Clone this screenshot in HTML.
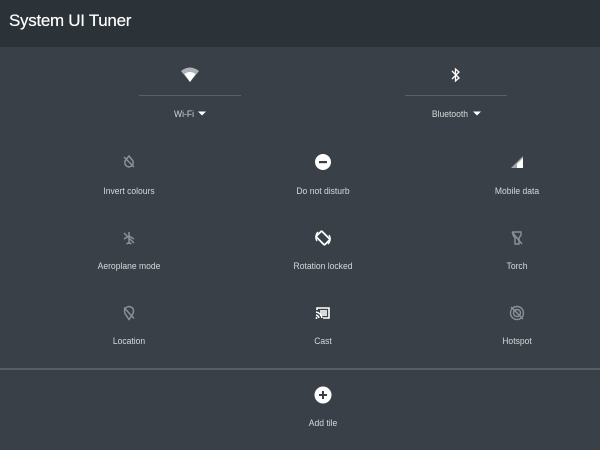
<!DOCTYPE html>
<html><head><style>
body{margin:0;width:600px;height:450px;background:#394047;font-family:"Liberation Sans",sans-serif;overflow:hidden;position:relative}
.hd{position:absolute;left:0;top:0;width:600px;height:47px;background:#2c3338}
.hd span{position:absolute;left:9px;top:11px;color:#fff;font-size:17px;letter-spacing:-0.3px;text-shadow:0 0 0.4px #fff}
.l{position:absolute;font-size:9px;color:#d6d8da;transform:translateX(-50%) scaleX(0.95);white-space:nowrap;line-height:10px}
.i{position:absolute;transform:translate(-50%,-50%)}
.ln{position:absolute;height:1px;background:#5a6066}
</style></head><body>
<div class="hd"><span>System UI Tuner</span></div>

<svg class="i" style="left:190px;top:75px" width="20" height="16" viewBox="0 0 20 16"><path d="M1 4Q10-3 19 4L10 15Z" fill="#fff" opacity=".6"/><path d="M4.5 7Q10 3 15.5 7L10 15Z" fill="#fff"/></svg>
<div class="ln" style="left:139px;top:95px;width:102px"></div>
<div class="l" style="left:184px;top:109px">Wi-Fi</div>
<svg class="i" style="left:202px;top:114px" width="8" height="5"><path d="M0 0H8L4 4Z" fill="#fff"/></svg>

<svg class="i" style="left:456px;top:75px" width="10" height="16" viewBox="0 0 10 16"><path d="M1 4L8 11 4.5 14V2L8 5 1 12" fill="none" stroke="#fff" stroke-width="1.3"/></svg>
<div class="ln" style="left:405px;top:95px;width:102px"></div>
<div class="l" style="left:450px;top:109px">Bluetooth</div>
<svg class="i" style="left:477px;top:114px" width="8" height="5"><path d="M0 0H8L4 4Z" fill="#fff"/></svg>

<svg class="i" style="left:129px;top:162px" width="14" height="14" viewBox="0 0 14 14"><path d="M7 1L3 6Q2 11 7 12Q12 11 11 6Z" fill="none" stroke="#8a9096" stroke-width="1.5"/><path d="M2 2L12 12" stroke="#8a9096" stroke-width="1.5"/></svg>
<div class="l" style="left:129px;top:186px">Invert colours</div>

<svg class="i" style="left:323px;top:162px" width="16" height="16"><circle cx="8" cy="8" r="8" fill="#fff"/><rect x="4" y="7" width="8" height="2.2" fill="#394047"/></svg>
<div class="l" style="left:323px;top:186px">Do not disturb</div>

<svg class="i" style="left:517px;top:162px" width="14" height="14"><path d="M1 13H13V1Z" fill="#fff" opacity=".55"/><path d="M7 13H13V3L7 9Z" fill="#fff"/></svg>
<div class="l" style="left:517px;top:186px">Mobile data</div>

<svg class="i" style="left:129px;top:238px" width="14" height="14" viewBox="0 0 14 14"><path d="M7 1V13M2 8L7 5 12 8M4.5 13L7 11.5 9.5 13M2 2L12 12" fill="none" stroke="#8a9096" stroke-width="1.5"/></svg>
<div class="l" style="left:129px;top:261px">Aeroplane mode</div>

<svg class="i" style="left:323px;top:238px" width="18" height="18" viewBox="0 0 18 18"><rect x="5" y="3" width="8" height="12" rx="1" transform="rotate(-45 9 9)" fill="none" stroke="#fff" stroke-width="1.8"/><path d="M3 12A7 7 0 0 1 4 3M15 6A7 7 0 0 1 14 15" fill="none" stroke="#fff" stroke-width="1.3"/></svg>
<div class="l" style="left:323px;top:261px">Rotation locked</div>

<svg class="i" style="left:517px;top:238px" width="12" height="14" viewBox="0 0 12 14"><path d="M2 1H10V4L8 7V13H4V7L2 4Z" fill="none" stroke="#8a9096" stroke-width="1.4"/><path d="M1 1L11 13" stroke="#8a9096" stroke-width="1.4"/></svg>
<div class="l" style="left:517px;top:261px">Torch</div>

<svg class="i" style="left:129px;top:313px" width="12" height="15" viewBox="0 0 12 15"><path d="M6 14L2 8Q0 2 6 1Q12 2 10 8Z" fill="none" stroke="#8a9096" stroke-width="1.5"/><path d="M1 2L11 13" stroke="#8a9096" stroke-width="1.5"/></svg>
<div class="l" style="left:129px;top:336px">Location</div>

<svg class="i" style="left:323px;top:313px" width="16" height="14" viewBox="0 0 16 14"><path d="M2 4V2H14V12H8" fill="none" stroke="#fff" stroke-width="1.6"/><path d="M1 6A7 7 0 0 1 7 12M1 9A4 4 0 0 1 4 12" fill="none" stroke="#fff" stroke-width="1.5"/><circle cx="1.5" cy="12" r="1" fill="#fff"/><rect x="5" y="4" width="7" height="6" fill="#fff" opacity=".8"/></svg>
<div class="l" style="left:323px;top:336px">Cast</div>

<svg class="i" style="left:517px;top:313px" width="16" height="16" viewBox="0 0 16 16"><circle cx="8" cy="8" r="6.5" fill="none" stroke="#8a9096" stroke-width="1.4"/><circle cx="8" cy="8" r="3.5" fill="none" stroke="#8a9096" stroke-width="1.4"/><path d="M2 2L14 14" stroke="#8a9096" stroke-width="1.5"/></svg>
<div class="l" style="left:517px;top:336px">Hotspot</div>

<div class="ln" style="left:0;top:368px;width:600px;height:2px;background:#585e64"></div>

<svg class="i" style="left:323px;top:395px" width="17" height="17"><circle cx="8.5" cy="8.5" r="8.5" fill="#fff"/><path d="M8.5 4.5V12.5M4.5 8.5H12.5" stroke="#394047" stroke-width="2"/></svg>
<div class="l" style="left:323px;top:418px">Add tile</div>
</body></html>
